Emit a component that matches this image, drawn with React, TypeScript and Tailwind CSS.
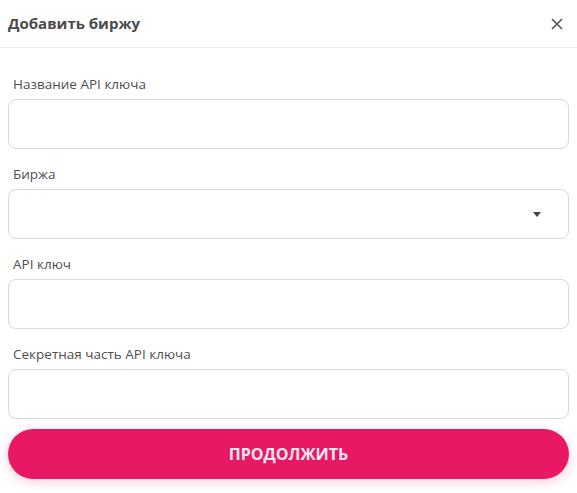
import React from "react";

const fields = [
  { label: "Название API ключа", type: "input" },
  { label: "Биржа", type: "select" },
  { label: "API ключ", type: "input" },
  { label: "Секретная часть API ключа", type: "input" },
];

export default function App() {
  return (
    <div className="w-[577px] h-[493px] bg-white font-['Open_Sans',sans-serif] overflow-hidden">
      <div className="flex h-[48px] items-center justify-between border-b border-[#ececec] pl-2 pr-[10px]">
        <h2 className="text-[15px] font-bold text-[#4b4b4b]">Добавить биржу</h2>
        <button type="button" className="flex h-5 w-5 items-center justify-center text-[#555]">
          <svg width="12" height="12" viewBox="0 0 12 12" fill="none" stroke="currentColor" strokeWidth="1.6">
            <path d="M1 1L11 11M11 1L1 11" />
          </svg>
        </button>
      </div>

      <div className="flex flex-col gap-[15px] px-2 pt-[26px]">
        {fields.map((f) => (
          <div key={f.label} className="flex flex-col gap-[5px]">
            <label className="h-5 pl-[5px] text-[13.5px] leading-5 text-[#4f4f4f]">{f.label}</label>
            {f.type === "select" ? (
              <div className="flex h-[50px] items-center justify-end rounded-[8px] border border-[#d9d9d9] pr-[27px]">
                <svg width="8" height="5" viewBox="0 0 8 5" fill="#444">
                  <path d="M0 0H8L4 5Z" />
                </svg>
              </div>
            ) : (
              <input className="h-[50px] rounded-[8px] border border-[#d9d9d9] px-3 outline-none" />
            )}
          </div>
        ))}
      </div>

      <div className="px-2 pt-[10px]">
        <button
          type="button"
          className="flex h-[50px] w-full items-center justify-center rounded-full bg-[#e91865] text-[16px] font-bold text-[#fde7f0] shadow-[0_3px_12px_rgba(233,24,101,0.22)]"
        >
          ПРОДОЛЖИТЬ
        </button>
      </div>
    </div>
  );
}
